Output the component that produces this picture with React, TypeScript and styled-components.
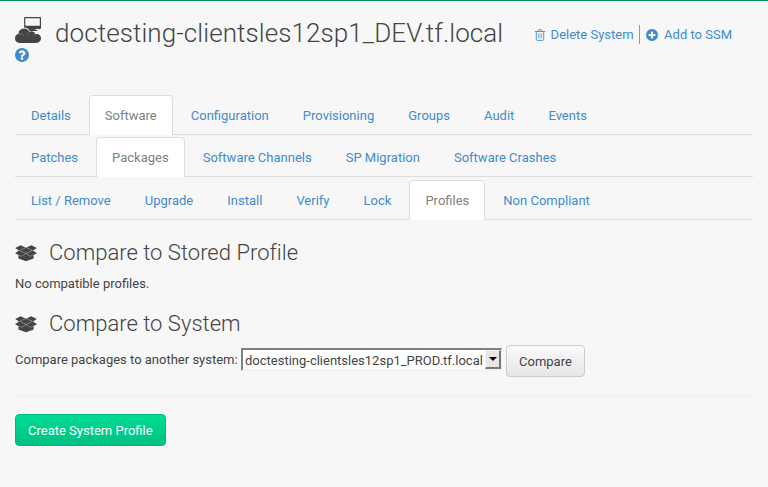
import React from "react";
import styled, { createGlobalStyle } from "styled-components";

const GlobalStyle = createGlobalStyle`
  * { box-sizing: border-box; }
  body {
    margin: 0;
    background: #f7f7f7;
    color: #444;
    font: 13px/19px Roboto, "Liberation Sans", sans-serif;
  }
`;

const Page = styled.main`
  height: 487px;
  overflow: hidden;
  padding: 0 15px;
  border-top: 1px solid #00895e;
`;

const Header = styled.header`
  display: flex;
  justify-content: space-between;
  height: 94px;
  padding-top: 15px;
`;

const TitleBlock = styled.div`
  display: flex;
  flex-direction: column;
  align-items: flex-start;
`;

const Title = styled.h1`
  display: flex;
  margin: 0;
  gap: 13px;
  height: 32px;
  font-size: 26px;
  font-weight: 300;
  line-height: 35px;
  letter-spacing: 0.09px;
  white-space: nowrap;
`;

const Icon = styled.svg<{ $w: number; $h: number }>`
  display: block;
  flex: none;
  width: ${(p) => p.$w}px;
  height: ${(p) => p.$h}px;
  fill: currentColor;
`;

const Help = styled.a`
  color: #428bca;
`;

const Actions = styled.div`
  display: flex;
  height: 19px;
  padding-right: 21px;
  margin-top: 9px;
`;

const Action = styled.a`
  display: flex;
  align-items: center;
  gap: 5px;
  height: 19px;
  color: #428bca;
  white-space: nowrap;

  & + & {
    padding-left: 6px;
    margin-left: 5.5px;
    border-left: 1px solid #999;
    gap: 6px;
  }
`;

const Tabs = styled.nav<{ $gap: number }>`
  display: flex;
  gap: 2px;
  height: 40px;
  margin-top: ${(p) => p.$gap}px;
  border-bottom: 1px solid #ddd;
`;

const Tab = styled.a<{ $active: boolean }>`
  height: 40px;
  padding: 10px 15.05px 10px 15px;
  border: 1px solid ${(p) => (p.$active ? "#ddd" : "transparent")};
  border-bottom: 0;
  border-radius: 4px 4px 0 0;
  background: ${(p) => (p.$active ? "#fff" : "transparent")};
  color: ${(p) => (p.$active ? "#808080" : "#428bca")};
  white-space: nowrap;
`;

const Section = styled.section<{ $top: number }>`
  margin-top: ${(p) => p.$top}px;
`;

const Heading = styled.h2`
  display: flex;
  align-items: center;
  gap: 12px;
  margin: 0;
  height: 28px;
  font-size: 22px;
  font-weight: 300;
  line-height: 28px;
  letter-spacing: 0.02px;
`;

const Message = styled.p`
  margin: 7px 0 0;
`;

const FormRow = styled.div`
  display: flex;
  align-items: flex-start;
  height: 32px;
  margin-top: 7px;
  white-space: nowrap;
`;

const Label = styled.label`
  width: 226px;
  padding-top: 5px;
`;

const SelectBox = styled.div`
  display: flex;
  justify-content: space-between;
  width: 261px;
  height: 23px;
  margin: 3px 4px 0 0;
  padding-left: 2px;
  border: 2px solid;
  border-color: #808080 #f4f2ee #f4f2ee #808080;
  border-right-width: 1px;
  background: #fff;
  line-height: 21px;
`;

const Arrow = styled.span`
  display: flex;
  align-items: center;
  justify-content: center;
  width: 16px;
  height: 19px;
  border: solid;
  border-width: 1px 2px 2px 1px;
  border-color: #f4f2ee #777 #777 #f4f2ee;
  background: #e9e7e3;

  &::after {
    content: "";
    border: solid transparent;
    border-width: 4px 4px 0;
    border-top-color: #000;
  }
`;

const Button = styled.button<{ $primary?: boolean }>`
  height: 32px;
  padding: 1px 12px 0;
  border: 1px solid ${(p) => (p.$primary ? "#00b881" : "#ccc")};
  border-radius: 4px;
  background: ${(p) =>
    p.$primary
      ? "linear-gradient(#00dc96, #00c082)"
      : "linear-gradient(#fafafa, #e6e6e6)"};
  color: ${(p) => (p.$primary ? "#fff" : "#444")};
  font: inherit;
`;

const Divider = styled.hr`
  height: 1px;
  margin: 18px 0;
  border: 0;
  background: #eee;
`;

const DISC =
  "M1664 896q0 209-103 385.500t-279.500 279.500-385.500 103-385.500-103-279.500-279.500-103-385.500 103-385.500 279.500-279.500 385.500-103 385.500 103 279.500 279.500 103 385.500z";

const SystemIcon = () => (
  <Icon $w={27} $h={28} viewBox="0 -1 27 28">
    <path
      fillRule="evenodd"
      d="M10 0h15q1 0 1 1v10q0 1-1 1h-4.500v1h2v1H14.500q-.5-2.800-4.500-3.200q-.9-.2-.9-.7V1q0-1 .9-1zM10.300 1.200v7.600h14.500V1.200z"
    />
    <path d="M4.700 26Q0 25.600 0 21.300q0-3.600 3.500-4.600Q3.700 11.700 9 11.500q4.300 0 5.300 3.500 1.300-1 2.800-.7 2.800.3 3.200 2.900 2.900-.9 4.700 1.200 1.900 2.300.3 5.400Q24 26 20.700 26z" />
    <path
      d="M3.700 17.300Q6 16.400 8.500 18M14.200 15.500Q12.600 16.500 12.700 18.200M20.200 17.500q-1.300 0-2 .8"
      fill="none"
      stroke="#999"
      strokeWidth=".5"
    />
  </Icon>
);

const HelpIcon = () => (
  <Icon $w={14} $h={14} viewBox="128 128 1536 1536">
    <path
      fillRule="evenodd"
      d={
        DISC +
        "M1024 1376v-192q0-14-9-23t-23-9h-192q-14 0-23 9t-9 23v192q0 14 9 23t23 9h192q14 0 23-9t9-23zm256-672q0-88-55.500-163t-138.500-116-170-41q-243 0-371 213-15 24 8 42l132 100q7 6 19 6 16 0 25-12 53-68 86-92 34-24 86-24 48 0 85.500 26t37.500 59q0 38-20 61t-68 45q-63 28-115.500 86.500t-52.500 125.500v36q0 14 9 23t23 9h192q14 0 23-9t9-23q0-19 21.500-49.500t54.500-49.500q32-18 49-28.500t46-35 44.500-48 28-60.500 12.500-81z"
      }
    />
  </Icon>
);

const TrashIcon = () => (
  <Icon $w={12} $h={12} viewBox="0 0 12 12">
    <path
      d="M.8 2.500h10.400M4 2.300 4.500.9q.1-.3.500-.3h2q.4 0 .5.300L8 2.300M2.300 2.500v7.800q0 1.100 1 1.100h5.400q1 0 1-1.100V2.500"
      fill="none"
      stroke="currentColor"
      strokeWidth=".9"
    />
    <path d="M4.400 4.300v5.200M6 4.300v5.200M7.600 4.300v5.200" stroke="currentColor" strokeWidth=".6" />
  </Icon>
);

const PlusIcon = () => (
  <Icon $w={12} $h={12} viewBox="128 128 1536 1536">
    <path
      fillRule="evenodd"
      d={
        DISC +
        "M1344 960v-128q0-26-19-45t-45-19h-256v-256q0-26-19-45t-45-19h-128q-26 0-45 19t-19 45v256h-256q-26 0-45 19t-19 45v128q0 26 19 45t45 19h256v256q0 26 19 45t45 19h128q26 0 45-19t19-45v-256h256q26 0 45-19t19-45z"
      }
    />
  </Icon>
);

const BoxIcon = () => (
  <Icon $w={22} $h={17} viewBox="0 0 22 17">
    <path d="M5.600.3 9.500 1.900 11 2.700 12.500 1.900 16.400.3 21.800 2.900 18 5.400 22 8.200 18.600 10.100V13.500L11 16.300 3.400 13.500v-3.400L0 8.200 4 5.400.2 2.900z" />
    <path
      d="M4.500 5.400 11 2.500 17.500 5.400 11 8.400zM11 8.400 6.800 11.300 3.400 9.900M11 8.400 15.200 11.300 18.600 9.900"
      fill="none"
      stroke="#b4b4b4"
      strokeWidth=".55"
    />
  </Icon>
);

const tabRows = [
  {
    gap: 0,
    active: "Software",
    items: ["Details", "Software", "Configuration", "Provisioning", "Groups", "Audit", "Events"],
  },
  {
    gap: 2,
    active: "Packages",
    items: ["Patches", "Packages", "Software Channels", "SP Migration", "Software Crashes"],
  },
  {
    gap: 3,
    active: "Profiles",
    items: ["List / Remove", "Upgrade", "Install", "Verify", "Lock", "Profiles", "Non Compliant"],
  },
];

export default function App() {
  return (
    <>
      <GlobalStyle />
      <Page>
        <Header>
          <TitleBlock>
            <Title>
              <SystemIcon />
              doctesting-clientsles12sp1_DEV.tf.local
            </Title>
            <Help>
              <HelpIcon />
            </Help>
          </TitleBlock>
          <Actions>
            <Action>
              <TrashIcon />
              Delete System
            </Action>
            <Action>
              <PlusIcon />
              Add to SSM
            </Action>
          </Actions>
        </Header>

        {tabRows.map((row) => (
          <Tabs key={row.active} $gap={row.gap}>
            {row.items.map((item) => (
              <Tab key={item} $active={item === row.active}>
                {item}
              </Tab>
            ))}
          </Tabs>
        ))}

        <Section $top={19}>
          <Heading>
            <BoxIcon />
            Compare to Stored Profile
          </Heading>
          <Message>No compatible profiles.</Message>
        </Section>

        <Section $top={17}>
          <Heading>
            <BoxIcon />
            Compare to System
          </Heading>
          <FormRow>
            <Label>Compare packages to another system:</Label>
            <SelectBox>
              doctesting-clientsles12sp1_PROD.tf.local
              <Arrow />
            </SelectBox>
            <Button>Compare</Button>
          </FormRow>
        </Section>

        <Divider />
        <Button $primary>Create System Profile</Button>
      </Page>
    </>
  );
}
